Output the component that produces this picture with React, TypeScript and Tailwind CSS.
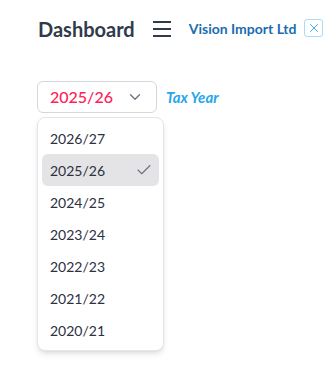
import { Check, ChevronDown, X } from 'lucide-react';

const years = ['2026/27', '2025/26', '2024/25', '2023/24', '2022/23', '2021/22', '2020/21'];

const App = () => {
    const selected = '2025/26';

    return (
        <div className="min-h-screen bg-white font-['Lato',sans-serif] pl-[37px] pt-[17px]">
            {/* Header */}
            <header className="flex items-center h-[24px]">
                <h1 className="text-[20px] leading-[24px] font-bold text-[#313a4b] ml-px">Dashboard</h1>
                <button className="ml-[18px] flex flex-col gap-[5px] w-[18px]" aria-label="Menu">
                    <span className="block h-[2px] w-full bg-[#313a4b]" />
                    <span className="block h-[2px] w-full bg-[#313a4b]" />
                    <span className="block h-[2px] w-full bg-[#313a4b]" />
                </button>
                <span className="ml-[18px] text-[14px] font-bold text-[#1a6db0] leading-none">Vision Import Ltd</span>
                <button
                    className="ml-[8px] -mt-[2px] w-[19px] h-[18px] flex items-center justify-center rounded-[3px] border border-[#a9dcf6]"
                    aria-label="Clear"
                >
                    <X size={14} strokeWidth={1.6} className="text-[#36a3e6]" />
                </button>
            </header>

            {/* Tax year select */}
            <div className="mt-[40px] flex items-center">
                <div className="relative">
                    <button className="w-[120px] h-[32px] flex items-center justify-between pl-3 pr-3 rounded-md border border-[#d4d7dd] bg-white">
                        <span className="text-[16px] font-medium text-[#ff2157]">{selected}</span>
                        <ChevronDown size={18} strokeWidth={1.8} className="text-[#6b7280]" />
                    </button>

                    {/* Options menu */}
                    <ul className="absolute left-0 top-[36px] w-[127px] p-1 bg-white border border-[#e3e5e9] rounded-lg shadow-md">
                        {years.map((y) => {
                            const active = y === selected;
                            return (
                                <li
                                    key={y}
                                    className={`h-[32px] flex items-center justify-between pl-2 pr-[6px] rounded-md text-[14px] text-[#2c3042] ${active ? 'bg-[#e4e4e7]' : ''}`}
                                >
                                    <span>{y}</span>
                                    {active && <Check size={18} strokeWidth={1.5} className="text-[#6b7280]" />}
                                </li>
                            );
                        })}
                    </ul>
                </div>
                <span className="ml-[9px] text-[15px] font-bold italic text-[#27a6ea]">Tax Year</span>
            </div>
        </div>
    );
};

export default App;
